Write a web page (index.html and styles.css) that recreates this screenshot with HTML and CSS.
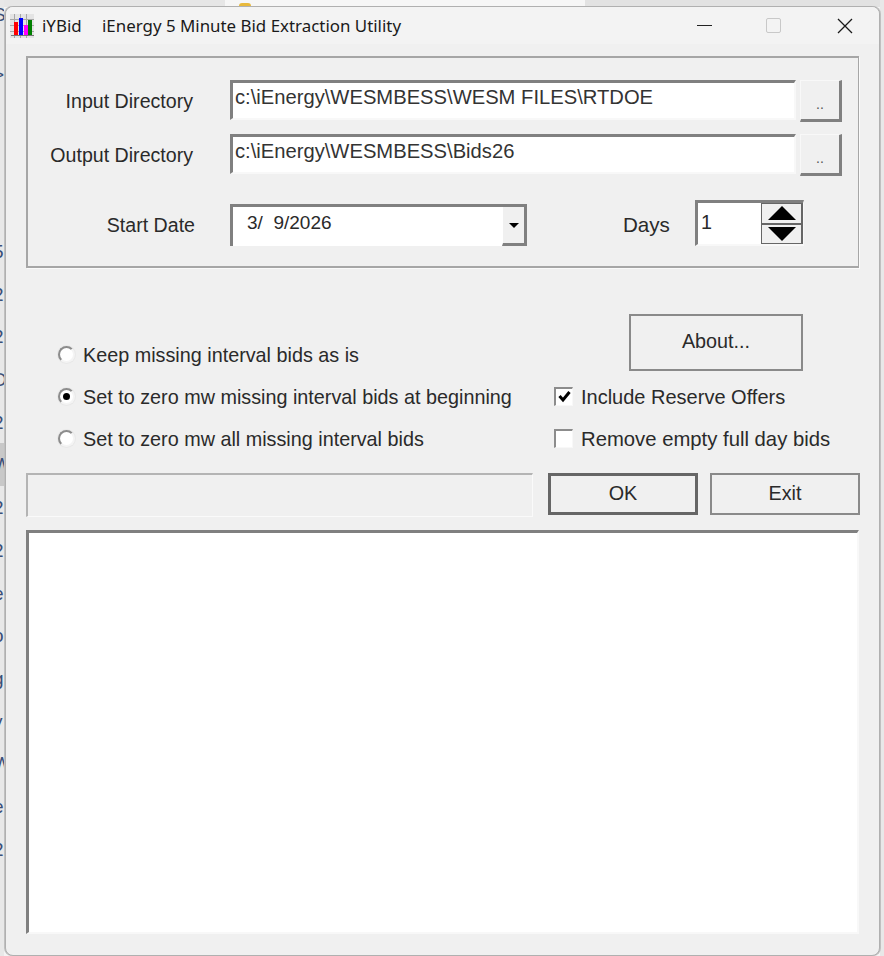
FILE: index.html
```html
<!DOCTYPE html>
<html>
	<head>
		<title>iYBid</title>
		<link rel="stylesheet" href="styles.css">
	</head>
	<body>
		<div class="desktop">
			<div class="topStrip">
				<span class="topA"></span><span class="topB"><i class="folder"></i></span><span class="topC"></span>
			</div>
			<div class="leftStrip">
				<span class="s1">S</span>
				<span class="s2">&gt;</span>
				<span class="s3">5</span>
				<span class="s4">2</span>
				<span class="s4">2</span>
				<span class="s4">D</span>
				<span class="s4">2</span>
				<span class="s4 hl">W</span>
				<span class="s4">2</span>
				<span class="s4">2</span>
				<span class="s4">e</span>
				<span class="s4">o</span>
				<span class="s4">g</span>
				<span class="s4">y</span>
				<span class="s4">W</span>
				<span class="s4">e</span>
				<span class="s4">2</span>
				<span class="s4">i</span>
			</div>
			<div class="rightStrip"></div>
		</div>

		<div class="window">
			<div class="titleBar">
				<svg class="appIcon" width="24" height="24" viewBox="0 0 24 24">
					<rect x="0" y="0" width="24" height="24" fill="#e4e4e4"/>
					<path d="M0 5.5h24M0 11.5h24M0 17.5h24M4.5 0v24M10.5 0v24M16.5 0v24" stroke="#a8a8a8" stroke-width="1"/>
					<rect x="4" y="8" width="4" height="13" fill="#ff0000"/>
					<rect x="9" y="4" width="4" height="17" fill="#0000ff"/>
					<rect x="14" y="11" width="4" height="10" fill="#ff00ff"/>
					<rect x="18" y="6" width="4" height="15" fill="#008000"/>
					<path d="M1 21.500h23" stroke="#777" stroke-width="1"/>
				</svg>
				<span class="appName">iYBid</span>
				<span class="appTitle">iEnergy 5 Minute Bid Extraction Utility</span>
				<span class="winBtn minBtn"></span>
				<span class="winBtn maxBtn"></span>
				<svg class="closeBtn" width="16" height="16" viewBox="0 0 16 16">
					<path d="M1 1L15 15M15 1L1 15" stroke="#1a1a1a" stroke-width="1.300" fill="none"/>
				</svg>
			</div>

			<div class="groupBox">
				<div class="row">
					<div class="label">Input Directory</div>
					<div class="textBox path">c:\iEnergy\WESMBESS\WESM FILES\RTDOE</div>
					<div class="dots">..</div>
				</div>
				<div class="row second">
					<div class="label">Output Directory</div>
					<div class="textBox path">c:\iEnergy\WESMBESS\Bids26</div>
					<div class="dots">..</div>
				</div>
				<div class="row third">
					<div class="label dateLabel">Start Date</div>
					<div class="textBox combo">
						<span class="dateVal">3/&nbsp; 9/2026</span>
						<span class="comboBtn"><i class="arrowDown small"></i></span>
					</div>
					<div class="daysLabel">Days</div>
					<div class="textBox days">
						<span class="daysVal">1</span>
						<span class="spin">
							<span class="spinBtn"><i class="arrowUp"></i></span>
							<span class="spinBtn"><i class="arrowDown"></i></span>
						</span>
					</div>
				</div>
			</div>

			<div class="options">
				<div class="opt first"><span class="radio"></span>Keep missing interval bids as is</div>
				<div class="aboutCell"><div class="btn about">About...</div></div>
				<div class="opt"><span class="radio on"></span>Set to zero mw missing interval bids at beginning</div>
				<div class="opt include"><span class="check">
					<svg width="15" height="15" viewBox="0 0 15 15"><path d="M2.500 7L6 11L12.500 3" stroke="#000" stroke-width="3" fill="none"/></svg>
				</span>Include Reserve Offers</div>
				<div class="opt"><span class="radio"></span>Set to zero mw all missing interval bids</div>
				<div class="opt wide"><span class="check"></span>Remove empty full day bids</div>
			</div>

			<div class="actions">
				<div class="status"></div>
				<div class="btn ok">OK</div>
				<div class="btn exit">Exit</div>
			</div>

			<div class="memo"></div>
		</div>
	</body>
</html>
```

FILE: styles.css
```css
html, body {
	margin: 0;
	height: 956px;
	overflow: hidden;
}
body {
	background: #f4f4f4;
	font-family: "Liberation Sans", Arial, sans-serif;
	font-size: 19.8px;
	color: #2a2a2a;
	position: relative;
}

/* what shows behind the window */
.desktop {
	position: absolute;
	inset: 0;
	overflow: hidden;
}
.topStrip {
	display: flex;
	height: 7px;
}
.topA {
	width: 225px;
	background: #e6e6e6;
}
.topB {
	width: 360px;
	background: #f6f6f6;
}
.topC {
	flex: 1;
	background: #e2e2e2;
}
.folder {
	display: block;
	width: 12px;
	height: 4px;
	margin: 3px 0 0 14px;
	background: #e8b93c;
	border-radius: 3px 3px 0 0;
}
.leftStrip {
	position: absolute;
	left: 0;
	top: 0;
	width: 4px;
	height: 956px;
	overflow: hidden;
	display: flex;
	flex-direction: column;
	align-items: flex-end;
	background: #e8e8e8;
	color: #3a4f78;
	font-size: 19px;
	line-height: 43px;
}
.leftStrip span {
	display: block;
	width: 4px;
	height: 42.7px;
	flex: none;
	text-indent: -7px;
	white-space: nowrap;
}
.leftStrip .s1 {
	height: 60px;
	line-height: 30px;
}
.leftStrip .s2 {
	height: 170px;
	line-height: 30px;
}
.leftStrip .hl {
	background: #c8c8c8;
}
.rightStrip {
	position: absolute;
	right: 0;
	top: 0;
	width: 4px;
	height: 956px;
	background: #e8e8e8;
}

/* the dialog */
.window {
	position: relative;
	box-sizing: border-box;
	width: 875px;
	height: 950px;
	margin: 0 0 0 5px;
	top: 6px;
	background: #f0f0f0;
	border: 1px solid #b0b0b0;
	border-radius: 8px;
	box-shadow: -1px 0 0 #c0c0c0, 1px 0 0 #c0c0c0;
	overflow: hidden;
}
.titleBar {
	display: flex;
	align-items: center;
	height: 37px;
	padding-left: 4px;
	background: #f3f3f3;
	font-family: "Noto Sans", sans-serif;
	font-size: 16.9px;
	color: #1a1a1a;
}
.appIcon {
	flex: none;
	margin-right: 8px;
}
.appName {
	width: 60px;
}
.appTitle {
	flex: 1;
}
.winBtn {
	display: block;
	box-sizing: border-box;
}
.minBtn {
	width: 15px;
	height: 1px;
	background: #222;
	margin-right: 54px;
}
.maxBtn {
	width: 15px;
	height: 15px;
	border: 1px solid #c8c8c8;
	border-radius: 2px;
	margin-right: 56px;
}
.closeBtn {
	flex: none;
	margin-right: 26px;
}

.groupBox {
	box-sizing: border-box;
	width: 833px;
	height: 212px;
	margin: 12px 0 0 20px;
	padding-top: 22px;
	border: 2px solid #a6a6a6;
	border-right-width: 1px;
	box-shadow: 1px 1px 0 #fafafa;
}
.row {
	display: flex;
	align-items: flex-start;
}
.second {
	margin-top: 12px;
}
.third {
	margin-top: 24px;
	align-items: flex-end;
	height: 46px;
}
.label {
	width: 165px;
	margin-right: 37px;
	text-align: right;
	font-size: 19.6px;
	line-height: 42px;
}
.dateLabel {
	width: 167px;
	margin-right: 35px;
}
.textBox {
	box-sizing: border-box;
	background: #fff;
	border-style: solid;
	border-width: 3px 2px 2px 3px;
	border-color: #808080 #f8f8f8 #f8f8f8 #808080;
}
.path {
	width: 566px;
	height: 40px;
	padding: 2px 0 0 2px;
	font-size: 20.2px;
	line-height: 24px;
	white-space: nowrap;
	color: #333;
}
.dots {
	box-sizing: border-box;
	width: 42px;
	height: 42px;
	margin-left: 4px;
	text-align: center;
	line-height: 46px;
	font-size: 14px;
	color: #555;
	border-style: solid;
	border-width: 1px 3px 3px 1px;
	border-color: #f8f8f8 #808080 #808080 #f8f8f8;
}
.combo {
	display: flex;
	width: 297px;
	height: 42px;
	border-right: 0;
	border-bottom: 0;
}
.dateVal {
	flex: 1;
	padding: 4px 0 0 14px;
	font-size: 19px;
	line-height: 24px;
}
.comboBtn {
	display: flex;
	align-items: center;
	justify-content: center;
	box-sizing: border-box;
	width: 25px;
	height: 39px;
	background: #f0f0f0;
	border-style: solid;
	border-width: 0 3px 3px 1px;
	border-color: #fff #808080 #808080 #fff;
}
.daysLabel {
	width: 47px;
	margin: 0 25px 0 96px;
	font-size: 20.6px;
	line-height: 42px;
}
.days {
	display: flex;
	width: 109px;
	height: 46px;
	border-right-width: 1px;
}
.daysVal {
	width: 63px;
	padding-left: 3px;
	line-height: 38px;
	box-sizing: border-box;
}
.spin {
	display: flex;
	flex-direction: column;
	flex: 1;
}
.spinBtn {
	flex: 1;
	display: flex;
	align-items: center;
	justify-content: center;
	background: #f0f0f0;
	border: 1px solid #666;
	border-right-width: 2px;
}
.arrowUp, .arrowDown {
	display: block;
	width: 0;
	height: 0;
	border-left: 14px solid transparent;
	border-right: 14px solid transparent;
}
.arrowUp {
	border-bottom: 14px solid #000;
}
.arrowDown {
	border-top: 14px solid #000;
}
.arrowDown.small {
	border-left-width: 5px;
	border-right-width: 5px;
	border-top-width: 5px;
}

.options {
	display: grid;
	grid-template-columns: 497px 1fr;
	grid-template-rows: 61px 42px 42px;
	margin: 46px 0 0 51px;
}
.opt {
	box-sizing: border-box;
	display: flex;
	align-items: center;
	height: 42px;
	padding-top: 2px;
	align-self: end;
	white-space: nowrap;
}
.include {
	font-size: 20px;
}
.wide {
	font-size: 20.3px;
}
.radio {
	box-sizing: border-box;
	flex: none;
	width: 17px;
	height: 17px;
	margin: -2px 8px 0 1px;
	background: #fff;
	border-radius: 50%;
	border: 2px solid;
	border-color: #8c8c8c #f4f4f4 #f4f4f4 #8c8c8c;
	box-shadow: 0 0 0 1px #e8e8e8;
	position: relative;
}
.radio.on::after {
	content: "";
	position: absolute;
	left: 3px;
	top: 3px;
	width: 7px;
	height: 7px;
	background: #000;
	border-radius: 50%;
}
.check {
	box-sizing: border-box;
	flex: none;
	display: flex;
	align-items: center;
	justify-content: center;
	width: 19px;
	height: 19px;
	margin: -2px 8px 0 0;
	background: #fff;
	border-style: solid;
	border-width: 2px 1px 1px 2px;
	border-color: #8c8c8c #f8f8f8 #f8f8f8 #8c8c8c;
}
.aboutCell {
	align-self: start;
}
.btn {
	box-sizing: border-box;
	text-align: center;
	background: #f0f0f0;
	border: 2px solid #8a8a8a;
}
.about {
	width: 174px;
	height: 57px;
	margin-left: 75px;
	line-height: 51px;
}

.actions {
	display: flex;
	align-items: flex-start;
	margin: 14px 0 0 20px;
}
.status {
	box-sizing: border-box;
	width: 507px;
	height: 44px;
	border-style: solid;
	border-width: 2px 1px 1px 2px;
	border-color: #b4b4b4 #fafafa #fafafa #b4b4b4;
}
.ok, .exit {
	width: 150px;
	height: 42px;
	line-height: 36px;
}
.ok {
	margin-left: 15px;
	border: 3px solid #666;
	line-height: 34px;
}
.exit {
	margin-left: 12px;
}
.memo {
	box-sizing: border-box;
	width: 833px;
	height: 404px;
	margin: 13px 0 0 20px;
	background: #fff;
	border-style: solid;
	border-width: 3px 2px 2px 3px;
	border-color: #808080 #f8f8f8 #f8f8f8 #808080;
}
```
